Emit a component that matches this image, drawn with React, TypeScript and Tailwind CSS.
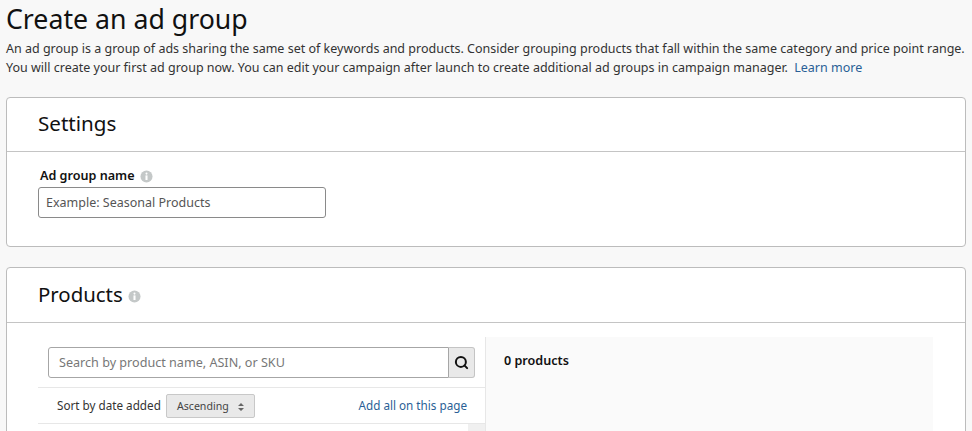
import { Search } from 'lucide-react';

function InfoDot({ size }: { size: string }) {
  return (
    <svg viewBox="0 0 14 14" className={size}>
      <circle cx="7" cy="7" r="6.5" fill="#c4c8c8" />
      <circle cx="7" cy="3.9" r="1.1" fill="#fff" />
      <rect x="5.9" y="5.8" width="2.2" height="5" fill="#fff" />
    </svg>
  );
}

export default function App() {
  return (
    <div className="h-[431px] w-[972px] overflow-hidden bg-[#f8f8f8] font-['Noto_Sans',sans-serif] text-[#111]">
      <h1 className="pl-[6px] text-[26.7px] leading-[38px]">Create an ad group</h1>
      <div className="mt-[1px] pl-[6px] text-[12.5px] leading-[19px] text-[#333] whitespace-nowrap">
        <p>An ad group is a group of ads sharing the same set of keywords and products. Consider grouping products that fall within the same category and price point range.</p>
        <p>
          You will create your first ad group now. You can edit your campaign after launch to create additional ad groups in campaign manager.{' '}
          <a className="ml-[3px] text-[#2a5f96]">Learn more</a>
        </p>
      </div>

      {/* Settings */}
      <section className="ml-[6px] mt-[20px] h-[150px] w-[960px] rounded-[4px] border border-[#bcbcbc] bg-white">
        <div className="flex h-[54px] items-center border-b border-[#c4c4c4] pb-[2px] pl-[31px] text-[20.6px]">Settings</div>
        <div className="pl-[31px] pt-[15px]">
          <div className="flex items-center gap-[5px] pl-[2px] text-[12.6px] leading-[18px] font-semibold">
            Ad group name
            <InfoDot size="h-[13px] w-[13px]" />
          </div>
          <div className="mt-[2px] flex h-[31px] w-[288px] items-center rounded-[3px] border border-[#8a8a8a] pl-[7px] pt-[1px] text-[12.5px] text-[#555]">
            Example: Seasonal Products
          </div>
        </div>
      </section>

      {/* Products */}
      <section className="ml-[6px] mt-[20px] h-[200px] w-[960px] rounded-t-[4px] border border-[#bcbcbc] bg-white">
        <div className="flex h-[55px] items-center gap-[5px] border-b border-[#c4c4c4] pb-[2px] pl-[31px] text-[20.4px]">
          Products
          <InfoDot size="mt-[5px] h-[13px] w-[13px]" />
        </div>
        <div className="ml-[31px] mt-[14px] flex h-[120px] w-[895px]">
          <div className="w-[448px] border-r border-[#e7e7e7]">
            <div className="flex pl-[10px] pt-[10px]">
              <div className="flex h-[31px] w-[401px] items-center rounded-l-[3px] border border-[#a6a6a6] pl-[10px] pt-[1px] text-[12.6px] text-[#777]">
                Search by product name, ASIN, or SKU
              </div>
              <div className="flex h-[31px] w-[26px] items-center justify-center rounded-r-[3px] border border-l-0 border-[#c4c4c4] bg-[#e9e9e9]">
                <Search size={15} strokeWidth={3.2} className="text-[#111]" />
              </div>
            </div>
            <div className="mt-[9px] flex h-[37px] items-center border-y border-[#e7e7e7] pl-[19px] pr-[18px] text-[11.7px] text-[#333]">
              <span>Sort by date added</span>
              <div className="ml-[5px] mt-[1px] flex h-[24px] w-[89px] items-center justify-center gap-[9px] rounded-[2px] border border-[#c8c8c8] bg-[#e9e9e9] pt-[1px] text-[10.6px] text-[#444]">
                Ascending
                <svg viewBox="0 0 6 8" className="h-[8px] w-[6px]" fill="#666">
                  <path d="M3 0 6 3H0zM3 8 0 5h6z" />
                </svg>
              </div>
              <a className="ml-auto text-[#2a5f96]">Add all on this page</a>
            </div>
            <div className="ml-auto h-[10px] w-[17px] bg-[#f0f0f0]" />
          </div>
          <div className="flex-1 bg-[#fafafa] pl-[18px] pt-[15px] text-[12.6px] font-semibold leading-[18px]">0 products</div>
        </div>
      </section>
    </div>
  );
}
